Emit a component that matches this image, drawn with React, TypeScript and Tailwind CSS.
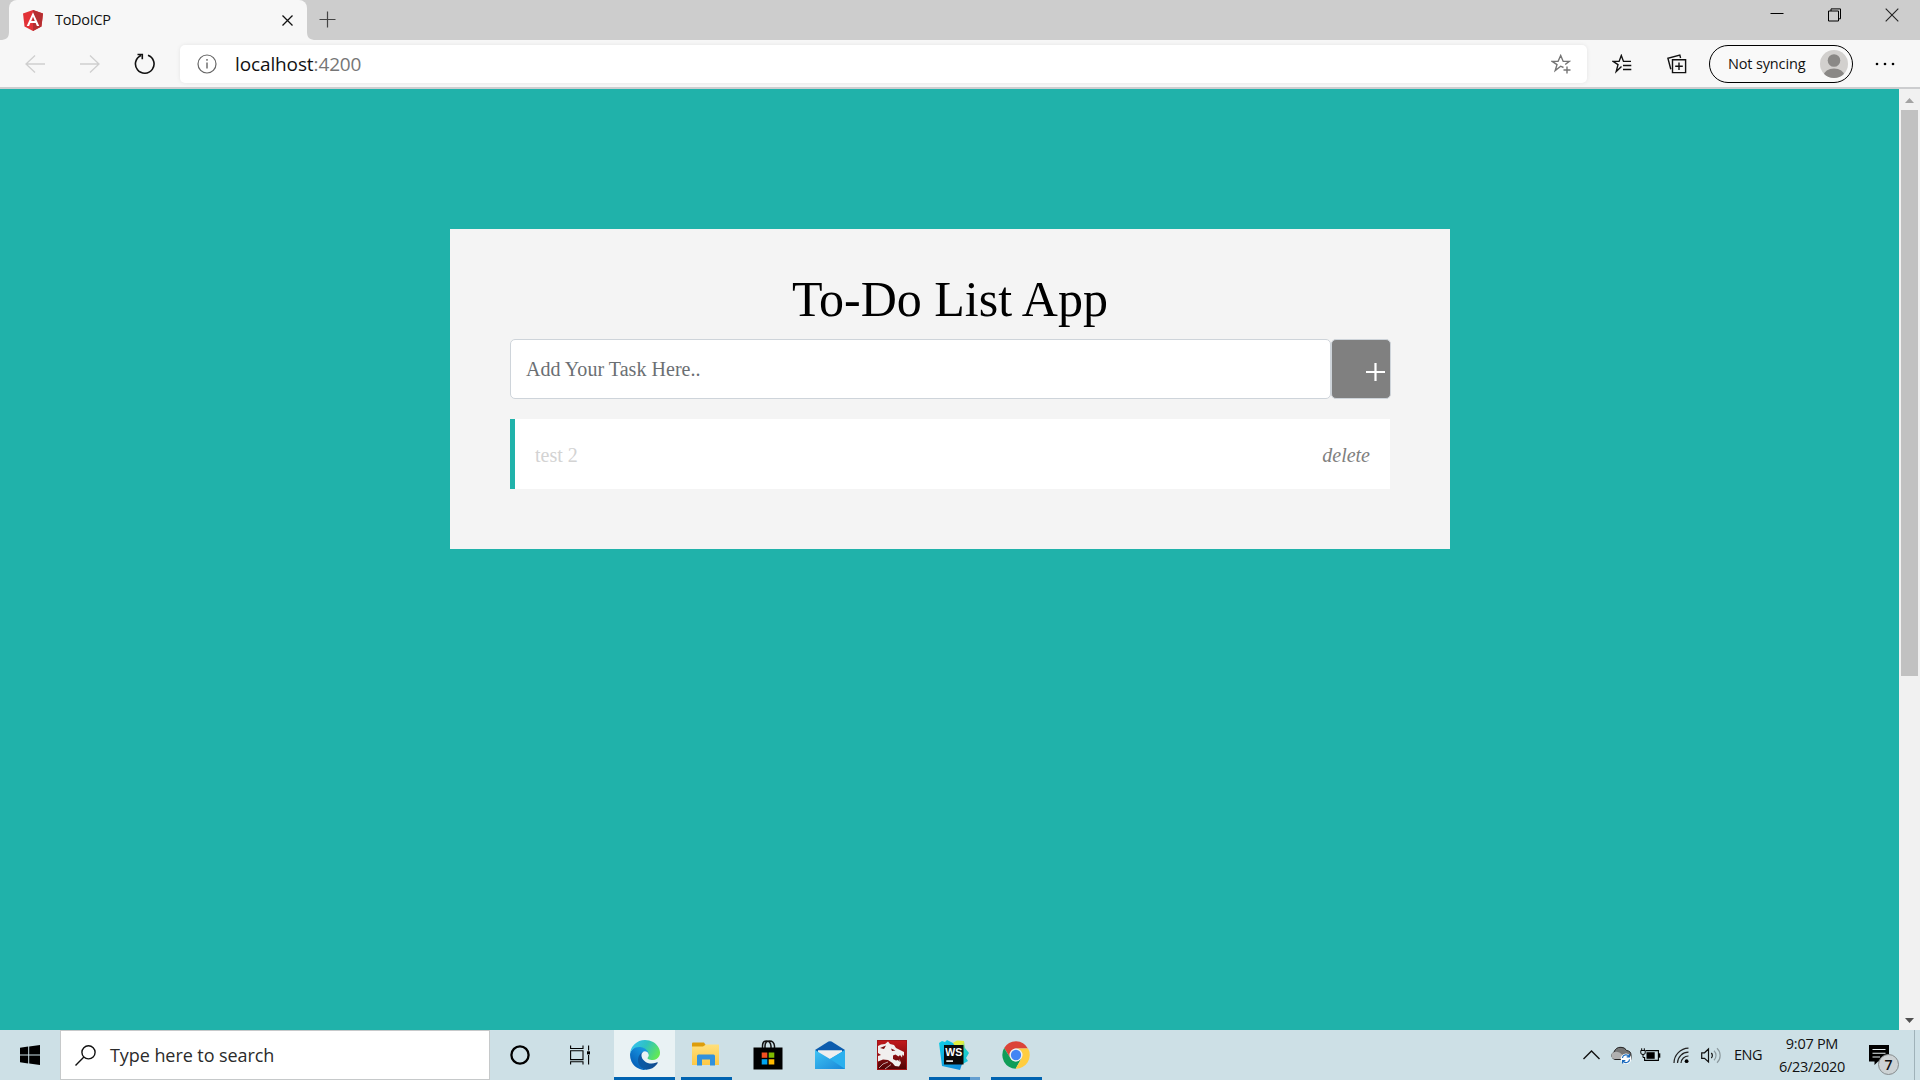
import React from "react";

function TabStrip() {
  return (
    <div className="flex h-[40px] items-end bg-[#cdcdcd]">
      <svg width="9" height="40" viewBox="0 0 9 40"><path d="M0 40C6 40 9 38 9 32V40Z" fill="#f7f7f7" /></svg>
      <div className="flex h-[40px] w-[298px] items-center rounded-t-[8px] bg-[#f7f7f7] pl-[14px] pr-[14px]">
        <svg width="20" height="21" viewBox="31.9 30 186.2 200" preserveAspectRatio="none">
          <polygon fill="#e23237" points="125,30 31.9,63.2 46.1,186.3 125,230 203.9,186.3 218.1,63.2" />
          <polygon fill="#b52e31" points="125,30 125,230 203.9,186.3 218.1,63.2" />
          <path fill="#fff" d="M125,52.1L66.8,182.6h21.7l11.7-29.2h49.4l11.7,29.2H183L125,52.1z M142,135.4H108l17-40.9L142,135.4z" />
        </svg>
        <span className="ml-[12px] text-[14.5px] leading-[20px] tracking-[-0.3px] text-[#111]">ToDoICP</span>
        <svg className="ml-auto" width="11" height="11" viewBox="0 0 11 11"><path d="M.5 .5L10.5 10.5M10.5 .5L.5 10.5" stroke="#111" strokeWidth="1.3" /></svg>
      </div>
      <svg width="9" height="40" viewBox="0 0 9 40"><path d="M9 40C3 40 0 38 0 32V40Z" fill="#f7f7f7" /></svg>
      <svg className="mb-[12px] ml-[3px]" width="17" height="17" viewBox="0 0 17 17"><path d="M8.5 0.5V16.5M0.5 8.5H16.5" stroke="#444" strokeWidth="1.2" /></svg>
      <div className="mb-[18px] ml-auto mr-[21px] flex items-center gap-[43.5px]">
        <svg width="14" height="14" viewBox="0 0 14 14"><path d="M0.5 5.5H13.5" stroke="#000" /></svg>
        <svg width="14" height="14" viewBox="0 0 14 14" fill="none" stroke="#000"><path d="M.5 3H10.5V13H.5ZM3 3V.9H12.5V10.8H10.5" /></svg>
        <svg width="14" height="14" viewBox="0 0 14 14"><path d="M.7 .7L13.3 13.3M13.3 .7L.7 13.3" stroke="#222" strokeWidth="1.1" /></svg>
      </div>
    </div>
  );
}

function Toolbar() {
  return (
    <div className="flex h-[49px] items-center border-b-2 border-[#cccdcf] bg-[#f7f7f7]">
      <svg className="ml-[25px]" width="20" height="18" viewBox="0 0 20 18" fill="none" stroke="#cfcfcf" strokeWidth="1.3"><path d="M20 9H1M10 .5L1 9L10 17.5" /></svg>
      <svg className="ml-[35px]" width="20" height="18" viewBox="0 0 20 18" fill="none" stroke="#cfcfcf" strokeWidth="1.3"><path d="M0 9H19M10 .5L19 9L10 17.5" /></svg>
      <svg className="ml-[34px]" width="22" height="22" viewBox="0 0 22 22" fill="none" stroke="#111" strokeWidth="1.6"><path d="M14 2.2A9.3 9.3 0 1 1 7 2.4M3.5 1.5H8.3V6.3" /></svg>
      <div className="ml-[24px] flex h-[38px] w-[1407px] items-center rounded-[5px] bg-white pl-[17px] pr-[16px] shadow-[0_0_4px_rgba(0,0,0,0.08)]">
        <svg width="20" height="20" viewBox="0 0 20 20" fill="none" stroke="#666" strokeWidth="1.2"><circle cx="10" cy="10" r="9" /><path d="M10 8.5V14.5M10 5V6.8" strokeWidth="1.4" /></svg>
        <span className="ml-[18px] text-[19px] leading-[24px] tracking-[-0.12px] text-[#111]">localhost<span className="text-[#767676]">:4200</span></span>
        <svg className="ml-auto" width="20" height="20" viewBox="0 0 20 20" fill="none" stroke="#757575" strokeWidth="1.4"><path d="M12.5 13.5L9.7 12.2L4.2 16.6L6 10.6L1.2 7.4H7.1L9.7 1.5L12.2 7.4H18.2L14.2 10.5M16 12.5V19.5M12.5 16H19.5" /></svg>
      </div>
      <svg className="ml-[25px]" width="20" height="20" viewBox="0 0 20 20" fill="none" stroke="#111" strokeWidth="1.4"><path d="M9.5 12.5L4.2 17.5L6 10.6L1 7.4H7.1L9.3 1.5L11.5 7.4H19M11 11.5H19.3M11 15.5H19.3" /></svg>
      <svg className="ml-[35px]" width="20" height="20" viewBox="0 0 20 20" fill="none" stroke="#111" strokeWidth="1.4"><path d="M5.5 5.7H18.6V18.6H5.5ZM12 8.5V16M8.2 12.2H15.8M3.8 15.2L.9 4.3L12.8 1L13.6 4" /></svg>
      <div className="ml-[22px] flex h-[38px] w-[144px] items-center rounded-full border border-black bg-[#f9f9f9] pl-[18px] pr-[4px]">
        <span className="whitespace-nowrap text-[14.5px] tracking-[-0.15px] text-[#111]">Not syncing</span>
        <svg className="ml-auto" width="28" height="28" viewBox="0 0 28 28"><defs><clipPath id="avatar"><circle cx="14" cy="14" r="14" /></clipPath></defs><g clipPath="url(#avatar)"><rect width="28" height="28" fill="#d2d0ce" /><circle cx="14" cy="10.5" r="6.3" fill="#8a8886" /><ellipse cx="14" cy="25.5" rx="10.2" ry="7" fill="#8a8886" /></g></svg>
      </div>
      <svg className="ml-[22px]" width="20" height="4" viewBox="0 0 20 4"><circle cx="2" cy="2" r="1.3" /><circle cx="10" cy="2" r="1.3" /><circle cx="18" cy="2" r="1.3" /></svg>
    </div>
  );
}

function TodoPage() {
  return (
    <main className="flex-1 bg-[#20b2aa] pt-[140px] font-['Liberation_Serif',serif]">
      <section className="ml-[450px] h-[320px] w-[1000px] bg-[#f4f4f4] px-[60px] pt-[40px]">
        <h1 className="h-[70px] text-center text-[50px] leading-[61px] text-black">To-Do List App</h1>
        <div className="-mr-px flex h-[60px]">
          <div className="flex min-w-0 flex-1 items-center rounded-[5px] border border-[#ced4da] bg-white pl-[15px] text-[20px] tracking-[0.04px] text-[#6b6f73]">Add Your Task Here..</div>
          <div className="flex w-[60px] shrink-0 items-center rounded-[5px] border border-[#ced4da] bg-[#808080] pl-[34px] pt-[7px]">
            <svg width="19" height="19" viewBox="0 0 19 19"><path d="M9.5 0V18M0 9H19" stroke="#fff" strokeWidth="2.2" /></svg>
          </div>
        </div>
        <div className="mt-[20px] flex h-[70px] items-center justify-between border-l-[5px] border-[#20b2aa] bg-white pl-[20px] pr-[20px] pt-px text-[20px]">
          <span className="text-[#d3d3d3]">test 2</span>
          <em className="text-[#808080]">delete</em>
        </div>
      </section>
    </main>
  );
}

function Scrollbar() {
  return (
    <div className="flex w-[21px] flex-col items-center bg-[#f1f1f1]">
      <svg className="h-[21px] shrink-0" width="21" height="21" viewBox="0 0 21 21"><path d="M6 14H15L10.5 9Z" fill="#a3a3a3" /></svg>
      <div className="h-[566px] w-[17px] bg-[#c1c1c1]" />
      <svg className="mt-auto h-[21px] shrink-0" width="21" height="21" viewBox="0 0 21 21"><path d="M6 9H15L10.5 14Z" fill="#505050" /></svg>
    </div>
  );
}

function EdgeIcon() {
  return (
    <svg width="30" height="30" viewBox="0 0 256 256">
      <defs>
        <linearGradient id="e1" x1="0.3" x2="1" y1="0.5" y2="0.5"><stop stopColor="#0c59a4" /><stop offset="1" stopColor="#114a8b" /></linearGradient>
        <linearGradient id="e2" x1="0.9" x2="0.3" y1="0.1" y2="0.9"><stop stopColor="#1b9de2" /><stop offset=".4" stopColor="#1387d6" /><stop offset="1" stopColor="#0560b8" /></linearGradient>
        <linearGradient id="e3" x1="0" x2="1" y1="0.3" y2="0.7"><stop stopColor="#35c1f1" /><stop offset=".45" stopColor="#2fc2c0" /><stop offset="1" stopColor="#66eb4e" /></linearGradient>
      </defs>
      <path fill="url(#e1)" d="M231 190.5c-3.4 1.8-6.8 3.4-10.4 4.6a101.3 101.3 0 0 1-35.5 6.4c-46.8 0-87.5-32.2-87.5-73.5a31.4 31.4 0 0 1 16.3-27.2c-42.3 1.8-53.2 45.9-53.2 71.7 0 73 67.3 80.4 81.8 80.4 7.8 0 19.6-2.2 26.7-4.5l1.3-.4a128.1 128.1 0 0 0 66.2-52.6c1.9-3.1-1.9-6.8-5.7-4.9z" />
      <path fill="url(#e2)" d="M105.7 241.4a79.2 79.2 0 0 1-22.7-21.3 80.7 80.7 0 0 1 29.5-119.5c3.2-1.5 8.6-4.2 15.7-4a32.3 32.3 0 0 1 25.7 13 31.9 31.9 0 0 1 6.4 18.6c0-.2 24.4-79.6-80-79.6-43.9 0-80 41.7-80 78.2a130.2 130.2 0 0 0 12.1 56 128 128 0 0 0 156.4 67.1 75.6 75.6 0 0 1-63.1-8.5z" />
      <path fill="url(#e3)" d="M152.3 148.9c-.8 1-3.3 2.5-3.3 5.6 0 2.6 1.7 5.1 4.7 7.3 14.4 10 41.5 8.6 41.6 8.6a59.6 59.6 0 0 0 30.3-8.3 61.4 61.4 0 0 0 30.4-52.9c.3-22.4-8-37.3-11.3-43.9C223.5 23.9 177.7.3 128 .3a128 128 0 0 0-128 126.2c.5-36.5 36.8-66 80-66 3.5 0 23.5.3 42 10 16.3 8.6 24.9 18.9 30.9 29.2 6.2 10.7 7.3 24.2 7.3 29.5 0 5.4-2.8 13.3-7.9 19.7z" />
    </svg>
  );
}

function ExplorerIcon() {
  return (
    <svg width="28" height="26" viewBox="0 0 28 26">
      <defs><linearGradient id="fold" x1="0" x2="0" y1="0" y2="1"><stop stopColor="#ffe07c" /><stop offset="1" stopColor="#fdc845" /></linearGradient></defs>
      <path d="M0 1.5Q0 .5 1 .5H12L14 3.5L12 5.5H0Z" fill="#dd9d0b" />
      <path d="M0 4.5H11L14 2.5H27V23H0Z" fill="url(#fold)" />
      <path d="M5 23.5V14Q5 12.5 6.5 12.5H21.5Q23 12.5 23 14V23.5H18V17.5H10V23.5Z" fill="#3191dc" />
    </svg>
  );
}

function StoreIcon() {
  return (
    <svg className="-ml-px" width="30" height="30" viewBox="0 0 30 30">
      <path d="M9.5 9V6Q9.5 1 13.5 1T18 6V9M12 9V6Q12 1 16.5 1T21.5 6V9" fill="none" stroke="#111" strokeWidth="1.5" />
      <path d="M.5 7.5H29.5V29.5H.5Z" />
      <path fill="#f25022" d="M8.7 12.5h5.6v5.3H8.7z" /><path fill="#7fba00" d="M15.7 12.5h5.6v5.3h-5.6z" />
      <path fill="#00a4ef" d="M8.7 19.2h5.6v5.3H8.7z" /><path fill="#ffb900" d="M15.7 19.2h5.6v5.3h-5.6z" />
    </svg>
  );
}

function MailIcon() {
  return (
    <svg width="30" height="28" viewBox="0 0 30 28">
      <defs><linearGradient id="ml" x1="0" x2="1" y1="0" y2="1"><stop stopColor="#40c4f4" /><stop offset="1" stopColor="#1987d8" /></linearGradient></defs>
      <path d="M0 9L13.5 .6Q15 -.2 16.5 .6L30 9L24 16H6Z" fill="#0b5cad" />
      <path d="M3 9.2H27V13L15 20L3 13Z" fill="#efefef" />
      <path d="M0 9L15 18L30 9V28H0Z" fill="url(#ml)" />
      <path d="M15 18L30 9V28Z" fill="#2bb0ee" />
    </svg>
  );
}

function DragonIcon() {
  return (
    <svg width="30" height="30" viewBox="0 0 30 30">
      <defs><linearGradient id="dr" x1="0" x2="0" y1="0" y2="1"><stop stopColor="#c2191c" /><stop offset=".5" stopColor="#8d0e10" /><stop offset="1" stopColor="#4d0506" /></linearGradient></defs>
      <rect x=".5" y=".5" width="29" height="29" fill="url(#dr)" stroke="#a31518" />
      <path fill="#f1efee" d="M1 13V6L4 4.5L8 4L11 1.5L13 4L17 5L19 8L23 10L27 12V16L25.5 14.5L25 17.5L23 15L21.5 16.5L18.5 14.5L16 15.5V19L19 20.5L21 20L22.5 22V19L24 23L22 26.5L18 26L15.5 23L11 20L6 19.5L1 21.5V16L4 15Z" />
      <path fill="#7a0c0e" d="M14 8.5L18.5 10.5L15 11ZM3 8L9 5.5L7 9Z" />
      <path d="M2 28L6 24L11 22M8 29L14 24.5" fill="none" stroke="#d9c9c9" strokeWidth=".8" />
    </svg>
  );
}

function WebStormIcon() {
  return (
    <svg width="30" height="30" viewBox="0 0 30 30">
      <defs>
        <linearGradient id="w1" x1="0" x2=".6" y1="0" y2="1"><stop stopColor="#12d0e6" /><stop offset="1" stopColor="#0e8fdc" /></linearGradient>
        <linearGradient id="w2" x1="0" x2=".6" y1="0" y2="1"><stop stopColor="#e6f23c" /><stop offset=".35" stopColor="#e0ee40" /><stop offset=".6" stopColor="#1fd0c8" /><stop offset="1" stopColor="#14c3dd" /></linearGradient>
      </defs>
      <path d="M12 4L18 .5L25 1L26 8L30 13L27 18L29 21L22 25L12 12Z" fill="url(#w2)" />
      <path d="M0 3L3 1L6 2L8 0L14 3L18 10L23 24L21 30L3 26Z" fill="url(#w1)" />
      <rect x="5" y="5" width="19.5" height="19.5" fill="#0a0a0a" />
      <text x="6.2" y="16" fill="#fff" fontSize="11.5" fontWeight="700" textLength="17" lengthAdjust="spacingAndGlyphs" fontFamily="Liberation Sans, sans-serif">WS</text>
      <path d="M7.3 20.2H14V22H7.3Z" fill="#ddd" />
    </svg>
  );
}

function ChromeIcon() {
  return (
    <svg width="28" height="28" viewBox="0 0 48 48">
      <path fill="#db4437" d="M24 .5A23.5 23.5 0 0 1 44.4 13H24A11 11 0 0 0 14.5 29.5L3.7 12.2A23.5 23.5 0 0 1 24 .5Z" />
      <path fill="#0f9d58" d="M3.7 12.2L14.5 29.5A11 11 0 0 0 27.5 34.4L33.5 29.5L23.4 47.5A23.5 23.5 0 0 1 3.7 12.2Z" />
      <path fill="#ffcd40" d="M24 13H44.8A23.5 23.5 0 0 1 23.4 47.5L33.5 29.5A11 11 0 0 0 24 13Z" />
      <circle cx="24" cy="24" r="11" fill="#f1f1f1" /><circle cx="24" cy="24" r="8.8" fill="#4285f4" />
    </svg>
  );
}

const Bar = () => <div className="h-[3px] w-[51px] bg-[#0063b1]" />;

function AppSlot({ children, bar }: { children: React.ReactNode; bar?: React.ReactNode }) {
  return (
    <div className="flex w-[62px] flex-col items-center">
      <div className="flex h-[47px] w-full items-center justify-center pt-[3px]">{children}</div>
      {bar}
    </div>
  );
}

function Taskbar() {
  return (
    <div className="flex h-[50px] bg-[#cde0e6]">
      <div className="flex w-[60px] items-center justify-center">
        <svg width="20" height="20" viewBox="0 0 20 20"><path d="M0 2.7L8.2 1.5V9.4H0ZM9.2 1.4L20 0V9.4H9.2ZM0 10.4H8.2V18.4L0 17.3ZM9.2 10.4H20V20L9.2 18.5Z" /></svg>
      </div>
      <div className="flex w-[430px] items-center border border-[#c6c9ca] bg-white pl-[14px]">
        <svg width="21" height="21" viewBox="0 0 21 21" fill="none" stroke="#111" strokeWidth="1.4"><circle cx="13.5" cy="7.3" r="6.6" /><path d="M8.9 12L.5 20.4" /></svg>
        <span className="ml-[14px] whitespace-nowrap text-[18px] tracking-[-0.07px] text-[#2b2b2b]">Type here to search</span>
      </div>
      <div className="flex w-[60px] items-center justify-center">
        <svg width="20" height="20" viewBox="0 0 20 20"><circle cx="10" cy="10" r="8.6" fill="none" stroke="#000" strokeWidth="2.3" /></svg>
      </div>
      <div className="flex w-[60px] items-center justify-center">
        <svg width="20" height="20" viewBox="0 0 20 20" fill="none" stroke="#000" strokeWidth="1.1"><path d="M.6 .5V3.5H13V.5M.6 5.8H13V14.6H.6ZM.6 19.5V16.7H13V19.5M18.6 .5V5.5M18.6 10V19.5" /><path d="M17 6.3H20V9.4H17Z" fill="#000" stroke="none" /></svg>
      </div>
      <div className="ml-[3px] flex">
        <div className="ml-px flex w-[61px] flex-col bg-[#e9f2f4]">
          <div className="flex h-[47px] items-center justify-center pt-[3px]"><EdgeIcon /></div>
          <div className="h-[3px] bg-[#0063b1]" />
        </div>
        <AppSlot bar={<Bar />}><ExplorerIcon /></AppSlot>
        <AppSlot><StoreIcon /></AppSlot>
        <AppSlot><MailIcon /></AppSlot>
        <AppSlot><DragonIcon /></AppSlot>
        <AppSlot bar={<div className="flex"><div className="h-[3px] w-[41px] bg-[#0063b1]" /><div className="h-[3px] w-[10px] bg-[#659fd0]" /></div>}><WebStormIcon /></AppSlot>
        <AppSlot bar={<Bar />}><ChromeIcon /></AppSlot>
      </div>
      <div className="ml-auto flex items-center text-[#111]">
        <svg width="17" height="10" viewBox="0 0 17 10" fill="none" stroke="#111" strokeWidth="1.4"><path d="M.5 9L8.5 1L16.5 9" /></svg>
        <svg className="ml-[11px]" width="21" height="18" viewBox="0 0 21 18">
          <path d="M4 13.5A4 4 0 0 1 3 6Q5 1 10 1.3Q14 1.2 15.5 4.5Q20 5 20 9V13.5Z" fill="#757575" stroke="#222" strokeWidth="1" />
          <path d="M4 13A3.5 3.5 0 0 1 4 6Q8 5 11 8.5L16 13Z" fill="#b0b0b0" />
          <circle cx="15" cy="12.7" r="5.3" fill="#fff" />
          <path d="M11.4 12A3.6 3.6 0 0 1 18 10.5M18.4 8V10.9H15.7M18.6 13.4A3.6 3.6 0 0 1 12 15M11.6 17.4V14.6H14.3" fill="none" stroke="#1769bd" strokeWidth="1.2" />
        </svg>
        <svg className="ml-[8px]" width="21" height="14" viewBox="0 0 21 14">
          <path d="M5.5 2.6H18.4V12.4H4.6V9" fill="none" stroke="#000" strokeWidth="1.1" /><path d="M6.5 4.2H14.7V10.8H6.5Z" /><path d="M18.5 5.3H20.3V9.7H18.5Z" /><path d="M.8 2.5H5.2V5Q5.2 6.5 3 6.5T.8 5ZM1.7 .3V2.5M4.3 .3V2.5M3 6.5V9.5H5" fill="#cde0e6" stroke="#000" />
        </svg>
        <svg className="ml-[12px]" width="17" height="17" viewBox="0 0 17 17" fill="none" stroke="#222" strokeWidth="1.2"><path d="M1 16A15 15 0 0 1 15.5 1.2M4.5 16A11 11 0 0 1 15.5 5.2M8 16A7.5 7.5 0 0 1 15.5 9" /><circle cx="13.6" cy="14.2" r="1.9" fill="#000" stroke="none" /></svg>
        <svg className="ml-[11px]" width="21" height="17" viewBox="0 0 21 17" fill="none" strokeWidth="1.2"><path d="M.7 5.8H3.5L7.5 2V15L3.5 11.3H.7ZM10.3 6A3.5 3.5 0 0 1 10.3 11" stroke="#111" /><path d="M13 3.8A6.5 6.5 0 0 1 13 13.2M16 1.2A10 10 0 0 1 16 15.8" stroke="#8d9a9f" /></svg>
        <span className="ml-[12px] w-[29px] text-[14.5px] tracking-[-0.45px]">ENG</span>
        <div className="ml-[14px] flex w-[70px] flex-col items-center whitespace-nowrap text-[14.5px] leading-[23px] tracking-[-0.28px]"><span>9:07 PM</span><span>6/23/2020</span></div>
        <div className="relative ml-[22px] h-[30px] w-[30px]">
          <svg className="mt-[5px]" width="20" height="20" viewBox="0 0 20 20"><path d="M0 0H20V16.5H9L5.5 20V16.5H0Z" /><path d="M3.5 4.5H16.5M3.5 8.3H16.5M3.5 12H11" stroke="#e5eef0" strokeWidth="1.1" /></svg>
          <div className="absolute left-[9px] top-[14px] flex h-[21px] w-[21px] items-center justify-center rounded-full border border-[#868b8d] bg-[#ccd2d4] text-[14px] font-semibold">7</div>
        </div>
        <div className="ml-[15px] mr-[5px] h-[50px] w-px bg-[#9fb2b9]" />
      </div>
    </div>
  );
}

export default function App() {
  return (
    <div className="flex h-[1080px] w-[1920px] flex-col overflow-hidden font-['Open_Sans','Noto_Sans',sans-serif]">
      <TabStrip />
      <Toolbar />
      <div className="flex h-[941px]">
        <TodoPage />
        <Scrollbar />
      </div>
      <Taskbar />
    </div>
  );
}
